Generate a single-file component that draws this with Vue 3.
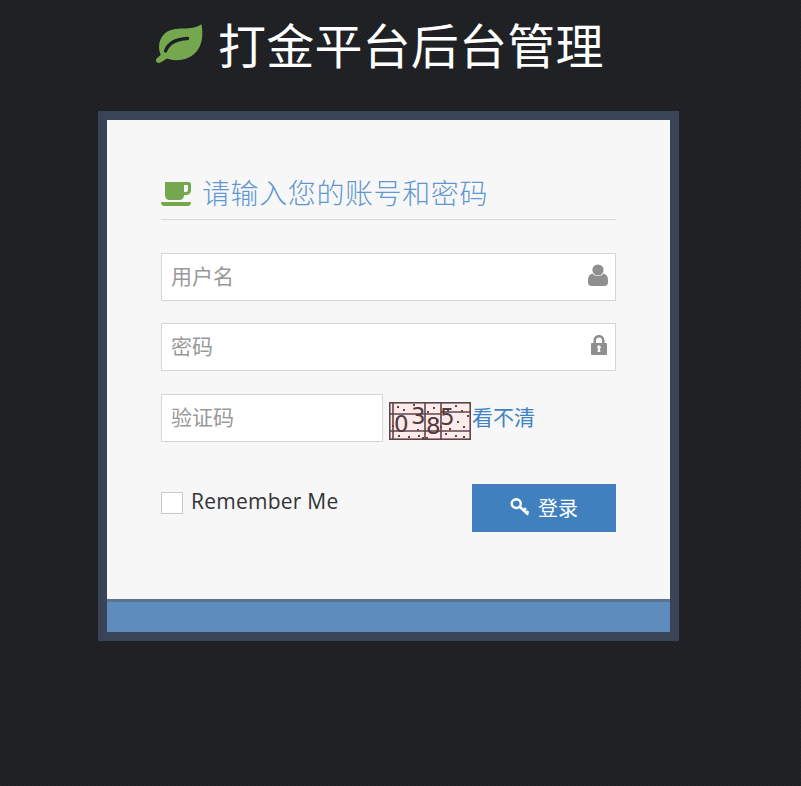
<script setup>
import { ref } from 'vue'

const username = ref('')
const password = ref('')
const code = ref('')
const remember = ref(false)

const noise = [
  [8, 4], [14, 7], [24, 2], [31, 6], [44, 5], [58, 8], [66, 3], [72, 8], [78, 13],
  [7, 16], [28, 27], [60, 26], [68, 19], [3, 23], [38, 9], [47, 18], [74, 24],
  [9, 33], [19, 34], [29, 33], [33, 35], [37, 35], [56, 31], [66, 33], [74, 34], [51, 24]
]
</script>

<template>
  <div class="page">
    <h1 class="title">
      <svg class="leaf" viewBox="0 0 50 40" width="50" height="40">
        <path fill="#75a74f" d="M47.500.3c1.500 8 1.500 18-4 26-6 8.500-18 12-29 8.700-1.500-.5-2.700 0-3.500.7l-4 2.600c-1.500 1-3.200 1-4.500-.3-1-1.200-.7-2.800.7-4l3.500-3c-3-7-2-15 3-20.500 5-5.500 13-6 20-6 6 0 12-.5 17.800-4.200z" />
        <path fill="none" stroke="#1d2024" stroke-width="3.400" stroke-linecap="round" d="M11.500 27C14.500 19 23 15 33.500 14.500" />
      </svg>
      <span>打金平台后台管理</span>
    </h1>

    <div class="box">
      <div class="main">
        <h4 class="heading">
          <svg class="cup" viewBox="0 0 30 24" width="30" height="24">
            <path fill="#75a74f" d="M4 0h24c1 0 2 1 2 3v5c0 3-2 5-5 5h-2c0 3-2 5-5 5H9c-3 0-5-2-5-5z" />
            <path fill="#f7f7f7" d="M23 3h3c.6 0 1 .4 1 1v4c0 1-1 2-2 2h-2z" />
            <path fill="#75a74f" d="M0 20h30c0 2-1 4-3 4H3c-2 0-3-2-3-4z" />
          </svg>
          <span>请输入您的账号和密码</span>
        </h4>

        <form class="form" @submit.prevent>
          <label class="field">
            <input v-model="username" type="text" placeholder="用户名" />
            <svg class="field-icon" viewBox="0 0 20 22" width="20" height="22">
              <circle cx="10" cy="6" r="5.600" fill="#8f8f8f" />
              <path fill="#8f8f8f" d="M4.500 9.500c1.400 1.800 3.300 2.600 5.500 2.600s4.100-.8 5.500-2.600c2.500.5 4.500 2.600 4.500 6.500v2.500c0 2-1.300 3.500-3.500 3.500H3.500C1.300 22 0 20.500 0 18.500V16c0-3.900 2-6 4.500-6.500z" />
            </svg>
          </label>

          <label class="field">
            <input v-model="password" type="password" placeholder="密码" />
            <svg class="field-icon lock" viewBox="0 0 16 20" width="16" height="20">
              <path fill="#8f8f8f" fill-rule="evenodd" d="M8 0c3.500 0 5.500 2.500 5.500 5.500V8H15c.6 0 1 .4 1 1v10c0 .6-.4 1-1 1H1c-.6 0-1-.4-1-1V9c0-.6.4-1 1-1h1.500V5.500C2.500 2.500 4.500 0 8 0zm0 2.500c-1.800 0-3 1.200-3 3V8h6V5.500c0-1.800-1.200-3-3-3zM8 10.500c-1 0-1.800.7-1.800 1.700 0 .7.300 1.200.9 1.500l-.6 3.300h3l-.6-3.300c.6-.3.900-.8.900-1.500 0-1-.8-1.700-1.800-1.700z" />
            </svg>
          </label>

          <div class="captcha-row">
            <label class="field code-field">
              <input v-model="code" type="text" placeholder="验证码" />
            </label>
            <svg class="captcha" viewBox="0 0 82 38" width="82" height="38">
              <rect x="0" y="0" width="82" height="38" fill="#fdeaea" />
              <g stroke="#5f4549" stroke-width="1.600" fill="none">
                <rect x=".8" y=".8" width="80.400" height="36.400" stroke-width="1.600" />
                <path d="M0 12h52M52 10h30M0 29h82M4 0v38M36 0v38M52 0v38" />
              </g>
              <g fill="#5f4549">
                <rect v-for="(n, i) in noise" :key="i" :x="n[0]" :y="n[1]" width="2" height="2" />
              </g>
              <g class="captcha-text" fill="#553b40">
                <text x="5" y="30" font-size="23">0</text>
                <text x="22" y="22" font-size="23">3</text>
                <text x="37" y="32" font-size="23">8</text>
                <text x="51" y="23" font-size="23">5</text>
              </g>
            </svg>
            <a class="refresh" href="#" @click.prevent>看不清</a>
          </div>

          <div class="actions">
            <label class="remember">
              <input v-model="remember" class="check" type="checkbox" />
              <span>Remember Me</span>
            </label>
            <button class="login" type="submit">
              <svg viewBox="0 0 20 20" width="20" height="20">
                <path fill="none" stroke="#fff" stroke-width="2.400" d="M6.300 2.200c2.500 0 4.500 2 4.500 4.400s-2 4.400-4.500 4.400-4.600-2-4.600-4.400 2.100-4.400 4.600-4.400z" />
                <path fill="none" stroke="#fff" stroke-width="2.600" d="M9.800 9.800l8.400 7.800M13.800 13.400l2.200-2.200M16.500 16l1.800-1.800" />
              </svg>
              <span>登录</span>
            </button>
          </div>
        </form>
      </div>
      <div class="toolbar"></div>
    </div>
  </div>
</template>

<style>
html,
body {
  background: #1d1f23;
}
</style>

<style scoped>
.page {
  width: 801px;
  height: 786px;
  overflow: hidden;
  box-sizing: border-box;
  padding: 0 0 0 98px;
  background-color: #1d1f23;
  background-image:
    radial-gradient(circle at 1px 1px, #212327 .7px, transparent 1px),
    radial-gradient(circle at 3px 3px, #212327 .7px, transparent 1px);
  background-size: 4px 4px;
  font-family: "Open Sans", "Noto Sans CJK SC", sans-serif;
}

.title {
  display: flex;
  align-items: center;
  gap: 14px;
  height: 87px;
  margin: 0 0 24px;
  padding-left: 56px;
  color: #fff;
  font-family: "Noto Sans CJK SC", sans-serif;
  font-size: 48px;
  font-weight: 400;
  letter-spacing: .2px;
  line-height: 87px;
}

.leaf {
  flex: none;
}

.box {
  display: flex;
  flex-direction: column;
  width: 563px;
  border: 9px solid #394557;
}

.main {
  box-sizing: border-box;
  height: 479px;
  padding: 54px 54px 0;
  background: #f7f7f7;
}

.heading {
  display: flex;
  align-items: center;
  gap: 11px;
  box-sizing: border-box;
  height: 46px;
  margin: 0 0 33px;
  padding-bottom: 5px;
  border-bottom: 1px solid #d5d9de;
  color: #5f97d0;
  font-family: "Noto Sans CJK SC", sans-serif;
  font-size: 28px;
  font-weight: 300;
  letter-spacing: .6px;
  line-height: 40px;
}

.heading span {
  margin-top: -5px;
}

.cup {
  flex: none;
}

.form {
  display: flex;
  flex-direction: column;
  gap: 22px;
}

.field {
  position: relative;
  display: block;
}

.field input {
  display: block;
  box-sizing: border-box;
  width: 100%;
  height: 48px;
  padding: 0 9px 4px;
  border: 1px solid #d5d5d5;
  border-radius: 0;
  outline: none;
  background: #fff;
  color: #555;
  font-family: "Noto Sans CJK SC", sans-serif;
  font-size: 21px;
}

.field input::placeholder {
  color: #999;
  opacity: 1;
}

.field-icon {
  position: absolute;
  top: 11px;
  right: 8px;
}

.field-icon.lock {
  top: 12px;
  right: 9px;
}

.captcha-row {
  display: flex;
  align-items: center;
  height: 48px;
  margin-top: 1px;
}

.code-field {
  flex: none;
  width: 222px;
  margin-right: 6px;
}

.captcha {
  flex: none;
  margin-top: 6px;
  margin-right: 1px;
}

.captcha-text text {
  font-family: "DejaVu Sans", sans-serif;
}

.refresh {
  margin-bottom: 4px;
  color: #3f84c2;
  font-family: "Noto Sans CJK SC", sans-serif;
  font-size: 21px;
  text-decoration: none;
}

.actions {
  display: flex;
  align-items: flex-start;
  justify-content: space-between;
  margin-top: 20px;
}

.remember {
  display: flex;
  align-items: flex-start;
  gap: 8px;
  color: #333;
  font-size: 21px;
  letter-spacing: .25px;
  line-height: 34px;
}

.check {
  appearance: none;
  box-sizing: border-box;
  width: 22px;
  height: 22px;
  margin: 8px 0 0;
  border: 1px solid #c8c8c8;
  background: #fff;
}

.login {
  display: flex;
  align-items: center;
  justify-content: center;
  gap: 8px;
  width: 144px;
  height: 48px;
  padding: 0 0 2px;
  border: 0;
  background: #4080bf;
  color: #fff;
  font-family: "Noto Sans CJK SC", sans-serif;
  font-size: 20px;
}

.toolbar {
  height: 30px;
  border-top: 3px solid #5b7291;
  background: #5e8dbd;
}
</style>
